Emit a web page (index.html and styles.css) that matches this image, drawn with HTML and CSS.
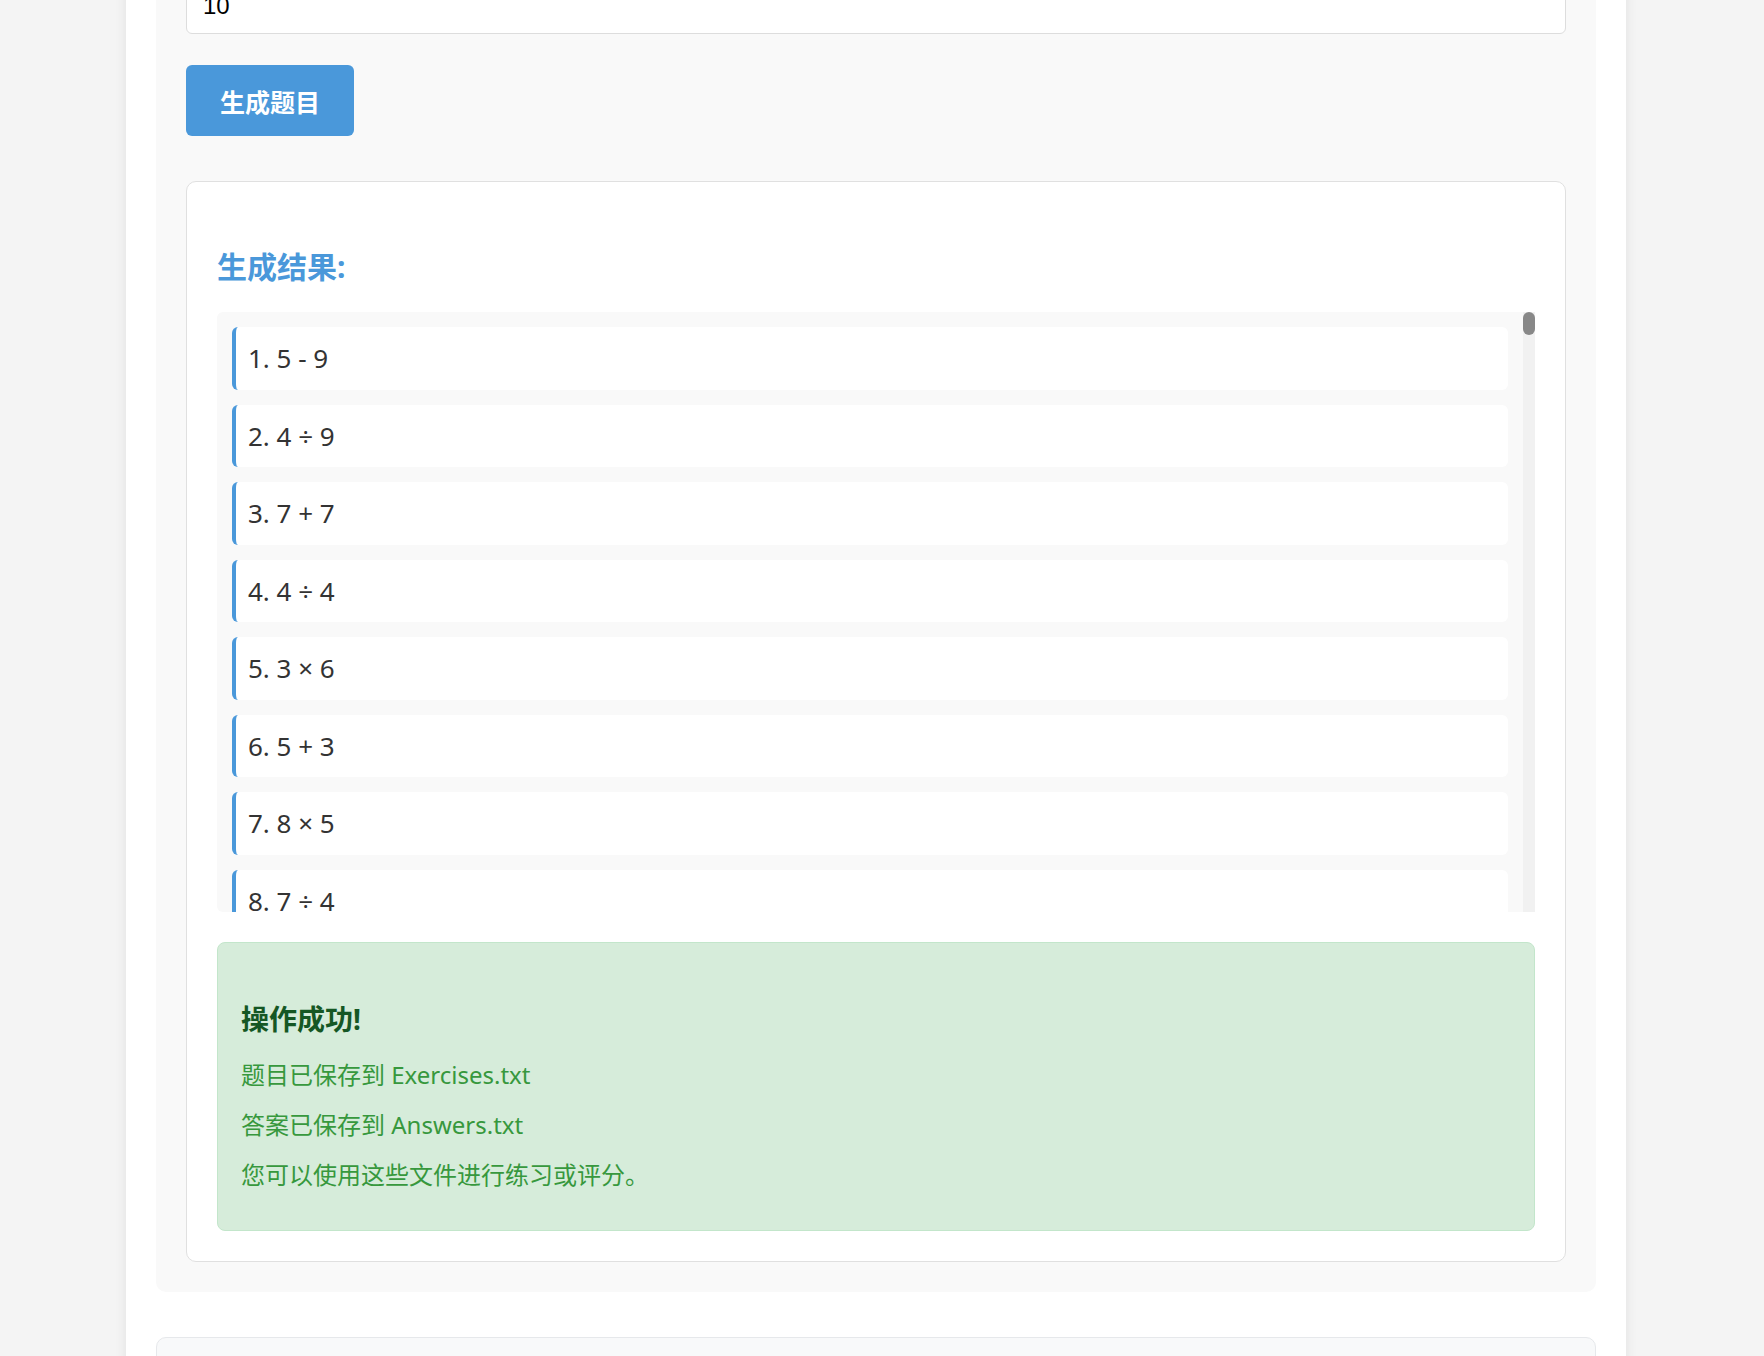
FILE: index.html
```html
<!DOCTYPE html>
<html lang="zh-CN">
<head>
  <meta charset="UTF-8" />
  <meta name="viewport" content="width=device-width, initial-scale=1.0"/>
  <title>四则运算题目生成器</title>
  <link rel="stylesheet" href="styles.css">
</head>
<body>
  <div class="container">
    <div class="section">
      <input type="number" id="count" class="count-input" value="10">

      <button id="generateBtn" class="btn-primary">生成题目</button>

      <div class="result-card">
        <h3 class="result-title">生成结果:</h3>

        <div class="list-wrap">
          <div class="exercise-list" id="exerciseList">
            <div class="exercise-item">1. 5 - 9</div>
            <div class="exercise-item">2. 4 ÷ 9</div>
            <div class="exercise-item">3. 7 + 7</div>
            <div class="exercise-item">4. 4 ÷ 4</div>
            <div class="exercise-item">5. 3 × 6</div>
            <div class="exercise-item">6. 5 + 3</div>
            <div class="exercise-item">7. 8 × 5</div>
            <div class="exercise-item">8. 7 ÷ 4</div>
          </div>
          <div class="scrollbar"><div class="scrollbar-thumb"></div></div>
        </div>

        <div class="success-box">
          <h4>操作成功!</h4>
          <p>题目已保存到 Exercises.txt</p>
          <p>答案已保存到 Answers.txt</p>
          <p>您可以使用这些文件进行练习或评分。</p>
        </div>
      </div>
    </div>

    <div class="section section-grade"></div>
  </div>
</body>
</html>
```

FILE: styles.css
```css
html {
  overflow: hidden;
}

body {
  background-color: #f4f4f4;
  margin: 0;
  font-family: "Noto Sans", "Noto Sans CJK SC", sans-serif;
  color: #333;
}

.container {
  width: 1500px;
  margin: -52px 0 0 126px;
  background-color: #fff;
  box-shadow: 0 0 12px rgba(0, 0, 0, 0.08);
  min-height: 1500px;
}

.section {
  background-color: #f9f9f9;
  border-radius: 10px;
  padding: 30px;
  margin-left: 30px;
  margin-right: 30px;
}

.count-input {
  display: block;
  box-sizing: border-box;
  width: 100%;
  height: 56px;
  padding: 0 16px;
  font-family: "Liberation Sans", Arial, sans-serif;
  font-size: 24px;
  color: #000;
  background-color: #fff;
  border: 1px solid #ddd;
  border-radius: 6px;
}

.btn-primary {
  display: block;
  margin-top: 31px;
  height: 71px;
  padding: 0 34px;
  font-family: "Noto Sans CJK SC", sans-serif;
  font-size: 25px;
  font-weight: bold;
  color: #fff;
  background-color: #4a98da;
  border: none;
  border-radius: 6px;
  cursor: pointer;
}

.result-card {
  margin-top: 45px;
  background-color: #fff;
  border: 1px solid #e0e0e0;
  border-radius: 10px;
  padding: 30px;
}

.result-title {
  margin: 35px 0 25px;
  font-size: 30px;
  line-height: 40px;
  font-weight: bold;
  color: #4a98da;
}

.list-wrap {
  position: relative;
}

.exercise-list {
  box-sizing: border-box;
  height: 600px;
  overflow: hidden;
  padding: 15px 27px 15px 15px;
  background-color: #f9f9f9;
  border-radius: 6px;
  display: flex;
  flex-direction: column;
  gap: 15px;
}

.scrollbar {
  position: absolute;
  top: 0;
  right: 0;
  bottom: 0;
  width: 12px;
  background: #f1f1f1;
}

.scrollbar-thumb {
  height: 23px;
  background: #888;
  border-radius: 6px;
}

.exercise-item {
  flex-shrink: 0;
  display: flex;
  align-items: center;
  height: 62.5px;
  box-sizing: border-box;
  padding: 0 12px;
  font-size: 26px;
  color: #333;
  background-color: #fff;
  border-left: 4px solid #4a98da;
  border-radius: 6px;
}

.success-box {
  margin-top: 30px;
  padding: 57px 23px 38px;
  background-color: #d6ecda;
  border: 1px solid #c3e6cb;
  border-radius: 8px;
}

.success-box h4 {
  margin: 0 0 20px;
  font-size: 28px;
  line-height: 38px;
  font-weight: bold;
  color: #155724;
}

.success-box p {
  margin: 0 0 16px;
  font-size: 24px;
  line-height: 34px;
  color: #37983d;
}

.success-box p:last-child {
  margin-bottom: 0;
}

.section-grade {
  margin-top: 45px;
  height: 300px;
  background-color: #f8f9fa;
  border: 1px solid #e6e8eb;
}
```
